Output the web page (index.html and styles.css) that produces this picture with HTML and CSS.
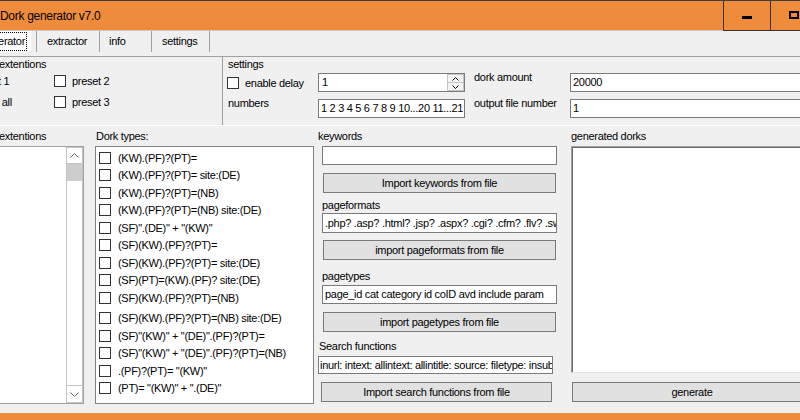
FILE: index.html
```html
<!DOCTYPE html>
<html>
<head>
<meta charset="utf-8">
<title>Dork generator v7.0</title>
<link rel="stylesheet" href="styles.css">
</head>
<body>
<div class="window">
  <header class="titlebar">
    <div class="title">Dork generator v7.0</div>
    <div class="winbtn"><span class="ico-min"></span></div>
    <div class="winbtn"><span class="ico-max"></span></div>
  </header>
  <nav class="tabs">
    <div class="tab sel"><span class="focus">generator</span></div>
    <div class="tab t-ext">extractor</div>
    <div class="tab t-info">info</div>
    <div class="tab t-set">settings</div>
  </nav>
  <main class="page">
    <section class="top">
      <div class="grp-ext">
        <div class="heading">extentions</div>
        <div class="presets">
          <div class="chk"><span class="box"></span>preset 1</div>
          <div class="chk"><span class="box"></span>preset 2</div>
          <div class="chk"><span class="box"></span>select all</div>
          <div class="chk"><span class="box"></span>preset 3</div>
        </div>
      </div>
      <div class="grp-set">
        <div class="heading hs">settings</div>
        <div class="set-grid">
          <div class="chk"><span class="box"></span>enable delay</div>
          <div class="input spin">
            <span class="val">1</span>
            <div class="spinner">
              <div class="sp-btn"><svg width="7" height="4" viewBox="0 0 7 4"><polyline points="0.5,3.5 3.5,0.5 6.5,3.5" fill="none" stroke="#000" stroke-width="1"/></svg></div>
              <div class="sp-btn"><svg width="7" height="4" viewBox="0 0 7 4"><polyline points="0.5,0.5 3.5,3.5 6.5,0.5" fill="none" stroke="#000" stroke-width="1"/></svg></div>
            </div>
          </div>
          <div class="lbl l2">dork amount</div>
          <div class="input num">20000</div>
          <div class="lbl l1">numbers</div>
          <div class="input">1 2 3 4 5 6 7 8 9 10...20 11...21</div>
          <div class="lbl l2">output file number</div>
          <div class="input num">1</div>
        </div>
      </div>
    </section>
    <section class="bottom">
      <div class="col-ext">
        <div class="clabel">extentions</div>
        <div class="listbox">
          <div class="scroll">
            <div class="sc-btn up"><svg width="9" height="5" viewBox="0 0 9 5"><polyline points="0.5,4.5 4.5,0.5 8.5,4.5" fill="none" stroke="#606060" stroke-width="1"/></svg></div>
            <div class="thumb"></div>
            <div class="track"></div>
            <div class="sc-btn down"><svg width="9" height="5" viewBox="0 0 9 5"><polyline points="0.5,0.5 4.5,4.5 8.5,0.5" fill="none" stroke="#606060" stroke-width="1"/></svg></div>
          </div>
        </div>
      </div>
      <div class="col-dork">
        <div class="clabel">Dork types:</div>
        <div class="checklist">
          <div class="item"><span class="box"></span>(KW).(PF)?(PT)=</div>
          <div class="item"><span class="box"></span>(KW).(PF)?(PT)= site:(DE)</div>
          <div class="item"><span class="box"></span>(KW).(PF)?(PT)=(NB)</div>
          <div class="item"><span class="box"></span>(KW).(PF)?(PT)=(NB) site:(DE)</div>
          <div class="item"><span class="box"></span>(SF)".(DE)" + "(KW)"</div>
          <div class="item"><span class="box"></span>(SF)(KW).(PF)?(PT)=</div>
          <div class="item"><span class="box"></span>(SF)(KW).(PF)?(PT)= site:(DE)</div>
          <div class="item"><span class="box"></span>(SF)(PT)=(KW).(PF)? site:(DE)</div>
          <div class="item"><span class="box"></span>(SF)(KW).(PF)?(PT)=(NB)</div>
          <div class="item gap"><span class="box"></span>(SF)(KW).(PF)?(PT)=(NB) site:(DE)</div>
          <div class="item"><span class="box"></span>(SF)"(KW)" + "(DE)".(PF)?(PT)=</div>
          <div class="item"><span class="box"></span>(SF)"(KW)" + "(DE)".(PF)?(PT)=(NB)</div>
          <div class="item"><span class="box"></span>.(PF)?(PT)= "(KW)"</div>
          <div class="item"><span class="box"></span>(PT)= "(KW)" + ".(DE)"</div>
        </div>
      </div>
      <div class="col-mid">
        <div class="m-lbl kw-lbl">keywords</div>
        <div class="input m-in kw-in"></div>
        <div class="btn kw-btn">Import keywords from file</div>
        <div class="m-lbl pf-lbl">pageformats</div>
        <div class="input m-in pf-in">.php? .asp? .html? .jsp? .aspx? .cgi? .cfm? .flv? .swf?</div>
        <div class="btn pf-btn">import pageformats from file</div>
        <div class="m-lbl pt-lbl">pagetypes</div>
        <div class="input m-in pt-in">page_id cat category id coID avd include param</div>
        <div class="btn pt-btn">import pagetypes from file</div>
        <div class="m-lbl sf-lbl">Search functions</div>
        <div class="input m-in sf-in">inurl: intext: allintext: allintitle: source: filetype: insubject:</div>
        <div class="btn sf-btn">Import search functions from file</div>
      </div>
      <div class="col-gen">
        <div class="clabel">generated dorks</div>
        <div class="output"></div>
        <div class="btn gen-btn">generate</div>
      </div>
    </section>
  </main>
  <div class="frame-bottom"></div>
</div>
</body>
</html>
```

FILE: styles.css
```css
* { box-sizing: border-box; }
html, body { margin: 0; padding: 0; }
body {
  width: 800px;
  height: 420px;
  overflow: hidden;
  background: #f0f0f0;
  font-family: "Liberation Sans", Arial, sans-serif;
  font-size: 11px;
  letter-spacing: -0.3px;
  color: #000;
}
.window {
  width: 800px;
  height: 420px;
  display: flex;
  flex-direction: column;
  overflow: hidden;
}

/* title bar */
.titlebar {
  flex: none;
  width: 817px;
  height: 31px;
  display: flex;
  background: #ee8c3b;
  border-top: 1px solid #404040;
}
.title {
  flex: 1;
  font-size: 12px;
  line-height: 28px;
  padding-top: 1px;
  border-bottom: 1px solid #c9c9c9;
  white-space: nowrap;
}
.winbtn {
  flex: none;
  width: 47px;
  border-left: 1px solid #333;
  border-bottom: 1px solid #333;
  display: flex;
  justify-content: center;
  align-items: flex-start;
}
.ico-min { width: 10px; height: 3px; background: #000; margin-top: 15px; }
.ico-max { width: 10px; height: 8px; border: 2px solid #000; margin-top: 10px; }

/* tabs */
.tabs {
  flex: none;
  height: 26px;
  display: flex;
  align-items: flex-start;
  border-bottom: 1px solid #a0a0a0;
}
.tab {
  flex: none;
  height: 21px;
  line-height: 21px;
  padding-left: 10px;
  border-right: 1px solid #a0a0a0;
  white-space: nowrap;
}
.tab.sel {
  margin-left: -30px;
  width: 61px;
  background: #fff;
  display: flex;
  align-items: center;
  justify-content: flex-end;
  padding: 0 4px 0 0;
  border-right: none;
}
.focus { border: 1px dotted #000; line-height: 17px; padding: 0 1px; }
.t-ext { margin-left: 5px; width: 64px; border-left: 1px solid #a0a0a0; }
.t-info { width: 52px; padding-left: 9px; }
.t-set { width: 58px; }

/* page */
.page { flex: none; display: flex; flex-direction: column; }
.top {
  height: 69px;
  display: flex;
  border-bottom: 1px solid #fff;
}
.heading { height: 14px; line-height: 14px; margin-bottom: 2px; white-space: nowrap; }
.grp-ext { flex: none; width: 269px; margin-left: -47px; }
.grp-ext .heading { padding-left: 46px; }
.presets {
  display: grid;
  grid-template-columns: 100px 100px;
  grid-auto-rows: 16px;
  row-gap: 5px;
  padding-left: 1px;
}
.chk { display: flex; align-items: center; white-space: nowrap; }
.box {
  flex: none;
  width: 12px;
  height: 12px;
  border: 1px solid #333;
  background: #fff;
  margin-right: 6px;
}
.grp-set { flex: 1; border-left: 1px solid #a0a0a0; padding-left: 4px; }
.hs { padding-left: 1px; }
.set-grid {
  display: grid;
  grid-template-columns: 91px 147px 105px 240px;
  grid-template-rows: 19px 19px;
  row-gap: 7px;
}
.lbl { line-height: 14px; margin-top: -3px; white-space: nowrap; }
.l1 { padding-left: 1px; }
.l2 { padding-left: 9px; }

.input {
  border: 1px solid #7a7a7a;
  background: #fff;
  line-height: 17px;
  padding-left: 2px;
  white-space: nowrap;
  overflow: hidden;
}
.input.num { padding-left: 2px; }
.spin { display: flex; padding-right: 0; }
.spin .val { flex: 1; padding-left: 1px; }
.spinner { flex: none; width: 17px; display: flex; flex-direction: column; }
.sp-btn {
  flex: 1;
  border: 1px solid #c4c4c4;
  background: #f4f4f4;
  display: flex;
  align-items: center;
  justify-content: center;
}
.sp-btn + .sp-btn { border-top: none; }

/* bottom area */
.bottom { height: 287px; display: flex; padding-top: 3px; }
.clabel { height: 14px; line-height: 14px; margin-bottom: 3px; white-space: nowrap; }
.col-ext { flex: none; width: 104px; margin-left: -20px; }
.col-ext .clabel { padding-left: 19px; }
.listbox {
  height: 258px;
  border: 1px solid #a0a0a0;
  background: #fff;
  display: flex;
  justify-content: flex-end;
}
.scroll {
  width: 17px;
  display: flex;
  flex-direction: column;
  border: 1px solid #c4c4c4;
  background: #fff;
}
.sc-btn { height: 16px; display: flex; align-items: center; justify-content: center; }
.sc-btn.up { border-bottom: 1px solid #c4c4c4; }
.sc-btn.down { border-top: 1px solid #c4c4c4; height: 17px; }
.thumb { height: 17px; background: #cdcdcd; }
.track { flex: 1; }

.col-dork { flex: none; width: 219px; margin-left: 11px; }
.col-dork .clabel { padding-left: 1px; }
.checklist {
  height: 258px;
  border: 1px solid #828282;
  background: #fff;
  padding: 2px 0 0 3px;
  overflow: hidden;
}
.item { height: 17.5px; display: flex; align-items: center; white-space: nowrap; }
.item .box { margin-right: 7px; }
.item.gap { margin-top: 3px; }

.col-mid {
  flex: none;
  width: 239px;
  margin-left: 4px;
  display: flex;
  flex-direction: column;
  align-items: flex-start;
}
.m-lbl { height: 14px; line-height: 14px; white-space: nowrap; }
.m-in { width: 235px; }
.btn {
  height: 20px;
  border: 1px solid #7a7a7a;
  background: #e1e1e1;
  text-align: center;
  line-height: 18px;
  white-space: nowrap;
}
.kw-in { margin-top: 3px; margin-left: 4px; height: 19px; }
.kw-btn { margin-top: 8px; margin-left: 5px; width: 233px; }
.pf-lbl { margin-top: 5px; padding-left: 4px; }
.pf-in { margin-top: 1px; margin-left: 4px; height: 20px; line-height: 18px; }
.pf-btn { margin-top: 7px; margin-left: 5px; width: 233px; }
.pt-lbl { margin-top: 9px; padding-left: 4px; }
.pt-in { margin-top: 2px; margin-left: 4px; height: 19px; }
.pt-btn { margin-top: 8px; margin-left: 5px; width: 233px; }
.sf-lbl { margin-top: 7px; padding-left: 1px; }
.sf-in { margin-top: 3px; height: 18px; line-height: 16px; padding-left: 1px; }
.sf-btn { margin-top: 8px; margin-left: 3px; width: 231px; }

.col-gen { flex: none; width: 240px; margin-left: 14px; }
.output {
  height: 227px;
  background: #fff;
  border-style: solid;
  border-width: 1px 0 1px 1px;
  border-color: #a0a0a0 #e3e3e3 #e3e3e3 #a0a0a0;
  box-shadow: inset 1px 1px 0 #696969;
}
.gen-btn { margin-top: 9px; margin-left: 1px; width: 240px; }

.frame-bottom { flex: none; height: 7px; background: #ee8c3b; }
```
